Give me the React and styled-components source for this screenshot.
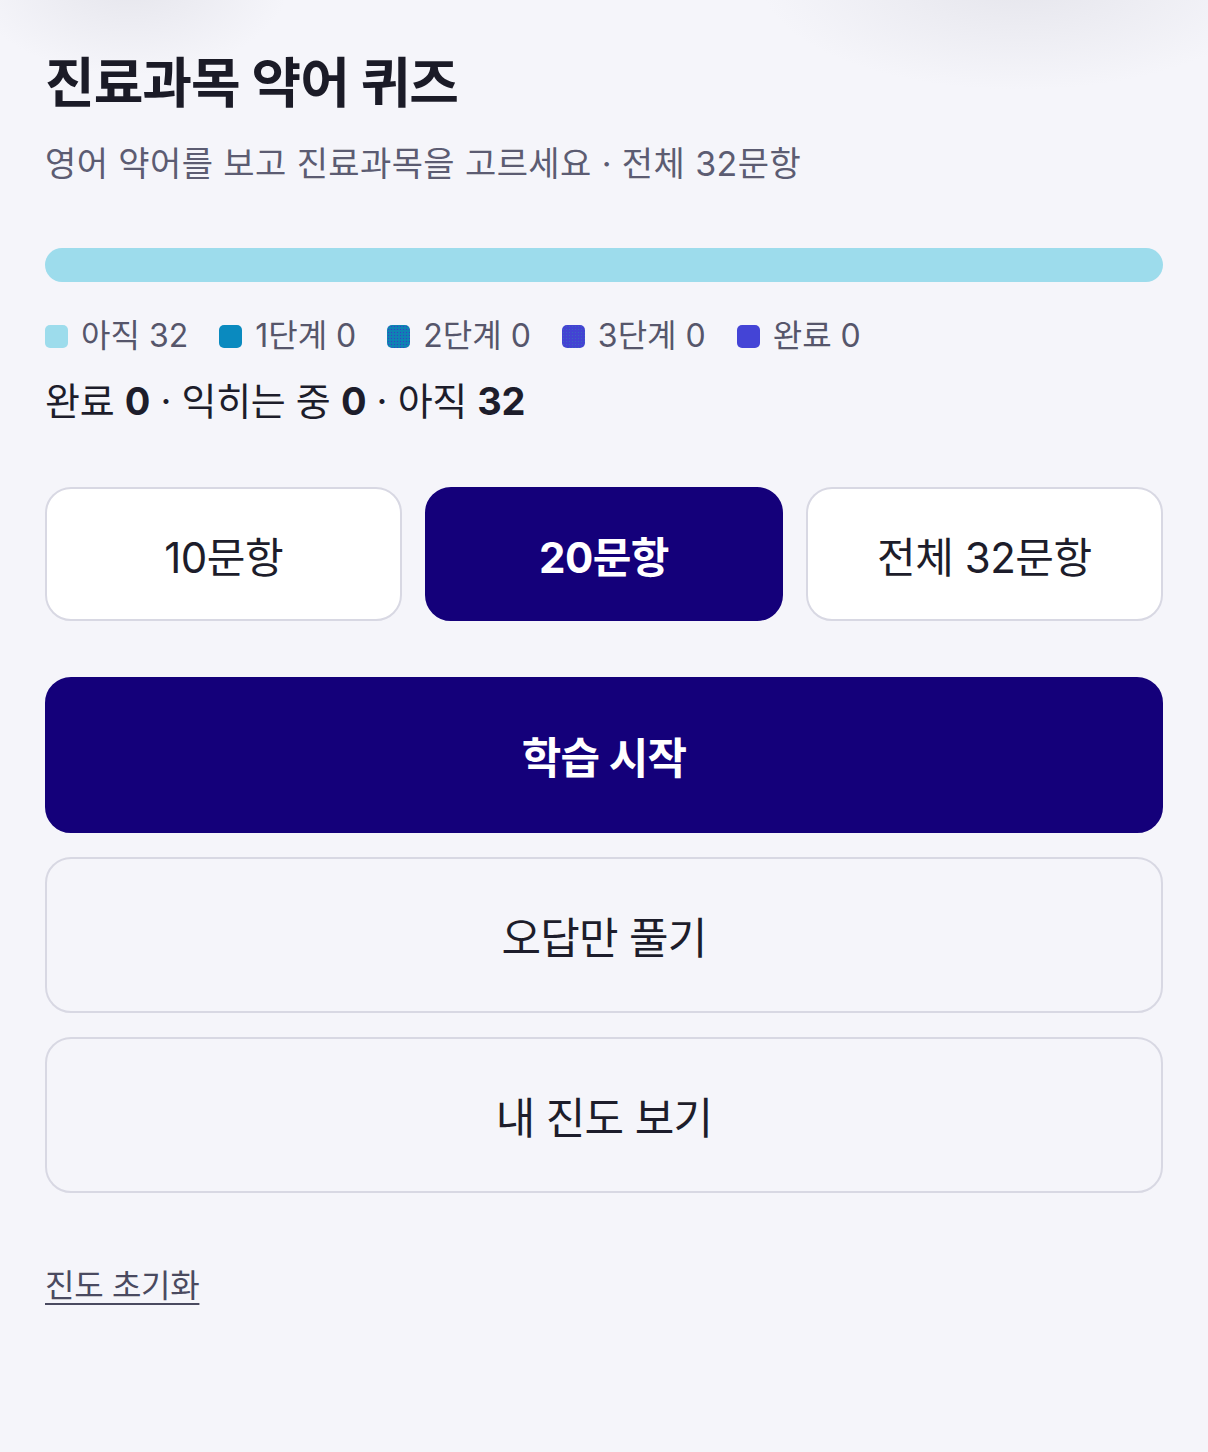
import React from "react";
import styled, { createGlobalStyle, css } from "styled-components";

const Global = createGlobalStyle`
  html, body { margin: 0; padding: 0; }
  body {
    background-color: #f5f5fa;
    background-image:
      radial-gradient(ellipse 160px 95px at 130px -20px, rgba(200,200,210,0.35), rgba(200,200,210,0) 100%),
      radial-gradient(ellipse 260px 110px at 1020px -20px, rgba(200,200,210,0.35), rgba(200,200,210,0) 100%);
    background-repeat: no-repeat;
    font-family: "Inter", "Noto Sans CJK KR", sans-serif;
    color: #1d1d2b;
    min-height: 1452px;
  }
`;

const Page = styled.main`
  padding: 44px 45px 60px;
  display: flex;
  flex-direction: column;
`;

const Title = styled.h1`
  margin: 0;
  font-size: 54px;
  font-weight: 700;
  letter-spacing: -1px;
  line-height: 80px;
  color: #1b1b27;
`;

const Subtitle = styled.p`
  margin: 18px 0 0;
  font-size: 34px;
  line-height: 44px;
  letter-spacing: 0.4px;
  color: #5c5c72;
`;

const Bar = styled.div`
  margin-top: 62px;
  height: 34px;
  border-radius: 17px;
  background: #9ddcec;
  overflow: hidden;
  display: flex;
`;

const Legend = styled.div`
  margin-top: 34px;
  display: flex;
  align-items: center;
  gap: 31px;
`;

const LegendItem = styled.span`
  display: flex;
  align-items: center;
  gap: 13px;
  font-size: 32px;
  line-height: 40px;
  letter-spacing: 0;
  color: #56566b;
`;

const Swatch = styled.i`
  width: 23px;
  height: 23px;
  border-radius: 5px;
  background: ${(p) => p.$c};
  ${(p) =>
    p.$dots &&
    css`
      background-image: radial-gradient(circle, ${p.$dots} 0.6px, transparent 1px);
      background-size: 3px 3px;
    `}
`;

const Summary = styled.p`
  margin: 22px 0 0;
  font-size: 38px;
  line-height: 46px;
  letter-spacing: -0.3px;
  color: #1d1d2b;
  b { font-weight: 700; }
`;

const Counts = styled.div`
  margin-top: 63px;
  display: grid;
  grid-template-columns: repeat(3, 1fr);
  gap: 23px;
`;

const CountButton = styled.button`
  height: 134px;
  border-radius: 26px;
  font-family: inherit;
  font-size: 42px;
  letter-spacing: -0.5px;
  cursor: pointer;
  ${(p) =>
    p.$active
      ? css`
          background: #14007a;
          border: 2px solid #14007a;
          color: #ffffff;
          font-weight: 700;
        `
      : css`
          background: #ffffff;
          border: 2px solid #d8d8e3;
          color: #1d1d2b;
          font-weight: 400;
        `}
`;

const Actions = styled.div`
  margin-top: 56px;
  display: flex;
  flex-direction: column;
  gap: 24px;
`;

const ActionButton = styled.button`
  height: 156px;
  border-radius: 26px;
  font-family: inherit;
  font-size: 43px;
  letter-spacing: -0.8px;
  cursor: pointer;
  ${(p) =>
    p.$primary
      ? css`
          background: #14007a;
          border: 2px solid #14007a;
          color: #ffffff;
          font-weight: 700;
        `
      : css`
          background: #f5f5fa;
          border: 2px solid #d8d8e3;
          color: #1d1d2b;
          font-weight: 400;
        `}
`;

const ResetLink = styled.a`
  margin-top: 72px;
  align-self: flex-start;
  font-size: 32px;
  line-height: 42px;
  letter-spacing: -0.3px;
  color: #4a4a60;
  text-decoration: underline;
  text-underline-offset: 6px;
  text-decoration-thickness: 2px;
  cursor: pointer;
`;

const legend = [
  { label: "아직 32", c: "#9ddcec" },
  { label: "1단계 0", c: "#0a8abf" },
  { label: "2단계 0", c: "#0f82b4", dots: "#3b3bc8" },
  { label: "3단계 0", c: "#4343d3", dots: "#3a66c0" },
  { label: "완료 0", c: "#4444d6" },
];

export default function App() {
  return (
    <>
      <Global />
      <Page>
        <Title>진료과목 약어 퀴즈</Title>
        <Subtitle>영어 약어를 보고 진료과목을 고르세요 · 전체 32문항</Subtitle>
        <Bar />
        <Legend>
          {legend.map((l) => (
            <LegendItem key={l.label}>
              <Swatch $c={l.c} $dots={l.dots} />
              {l.label}
            </LegendItem>
          ))}
        </Legend>
        <Summary>
          완료 <b>0</b> · 익히는 중 <b>0</b> · 아직 <b>32</b>
        </Summary>
        <Counts>
          <CountButton>10문항</CountButton>
          <CountButton $active>20문항</CountButton>
          <CountButton>전체 32문항</CountButton>
        </Counts>
        <Actions>
          <ActionButton $primary>학습 시작</ActionButton>
          <ActionButton>오답만 풀기</ActionButton>
          <ActionButton>내 진도 보기</ActionButton>
        </Actions>
        <ResetLink>진도 초기화</ResetLink>
      </Page>
    </>
  );
}
